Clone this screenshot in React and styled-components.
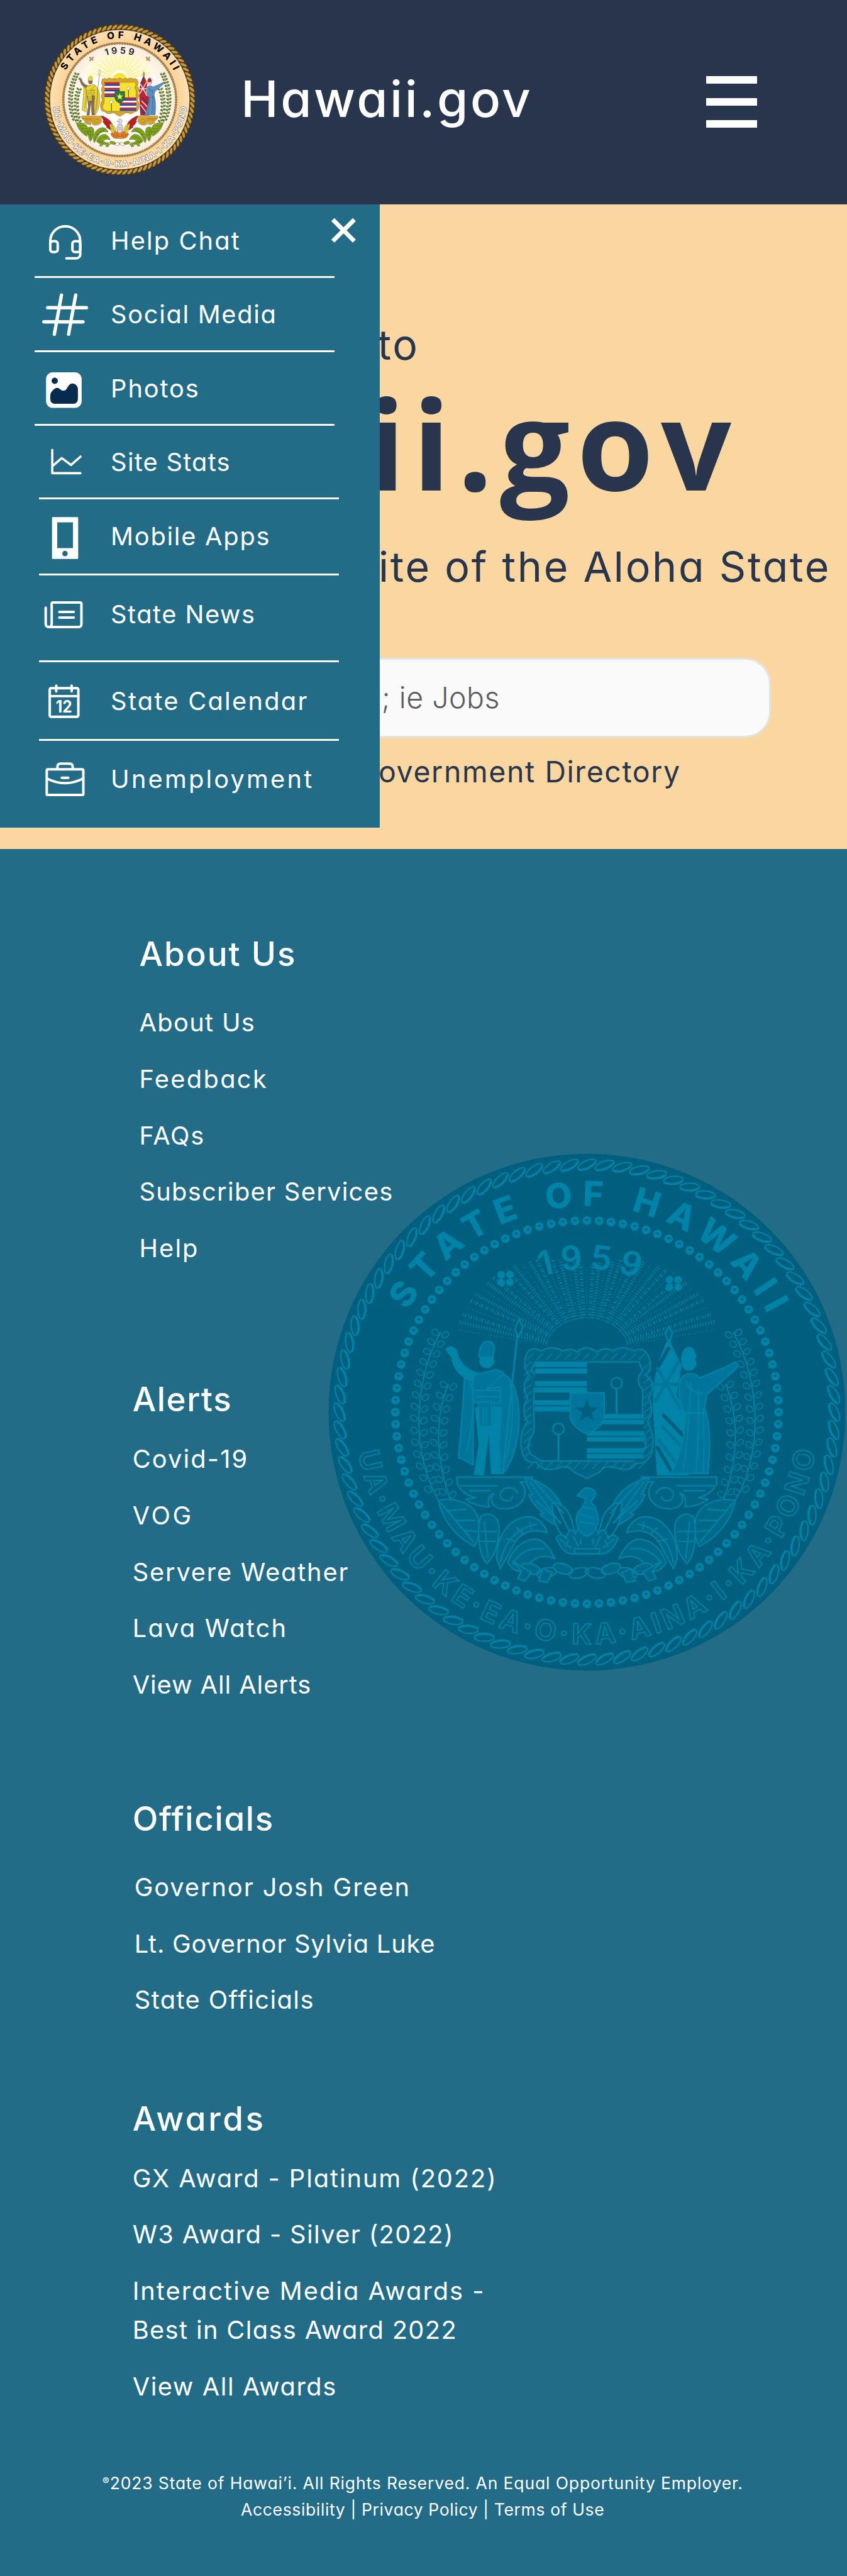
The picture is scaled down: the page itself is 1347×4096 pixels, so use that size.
import React from 'react';
import styled, { createGlobalStyle } from 'styled-components';

const K = 1347 / 1560;
const u = (n) => `${(n * K).toFixed(2)}px`;

const NAVY = '#29354d';
const TEAL = '#226c87';
const SAND = '#fad7a0';
const SEAL_BG = '#005f7f';
const SEAL_MID = '#00749a';
const SEAL_LINE = '#0083a6';

const GlobalStyle = createGlobalStyle`
  * { box-sizing: border-box; }
  body {
    margin: 0;
    background: ${TEAL};
    font-family: Inter, "Open Sans", sans-serif;
    font-feature-settings: "cv11";
  }
  h1, h2, p, ul { margin: 0; padding: 0; }
  ul { list-style: none; }
`;

const Page = styled.div`
  width: ${u(1560)};
  height: 4096px;
  display: flex;
  flex-direction: column;
  overflow: hidden;
`;

/* ---------- header ---------- */

const Header = styled.header`
  display: flex;
  align-items: flex-start;
  height: ${u(376)};
  flex: none;
  padding: 0 ${u(166)} 0 ${u(80.5)};
  background: ${NAVY};
`;

const HeaderSeal = styled.svg`
  width: ${u(279)};
  height: ${u(279)};
  margin-top: ${u(44.5)};
  flex: none;
`;

const Brand = styled.h1`
  margin: ${u(110.5)} auto 0 ${u(84.5)};
  color: #fff;
  font-size: ${u(92.2)};
  font-weight: 500;
  line-height: ${u(144)};
  letter-spacing: 0.0449em;
  white-space: nowrap;
`;

const Burger = styled.div`
  display: flex;
  flex-direction: column;
  justify-content: space-between;
  width: ${u(94)};
  height: ${u(95)};
  margin-top: ${u(140)};
`;

const BurgerBar = styled.span`
  height: ${u(13.6)};
  background: #fff;
`;

/* ---------- hero ---------- */

const Hero = styled.section`
  position: relative;
  display: flex;
  flex-direction: column;
  align-items: flex-end;
  height: ${u(1188)};
  flex: none;
  padding-top: ${u(200)};
  background: ${SAND};
  color: ${NAVY};
  white-space: nowrap;
`;

const HeroLine = styled.p`
  padding-right: ${(p) => u(p.$right)};
  font-size: ${u(76.8)};
  line-height: ${u(120)};
  letter-spacing: 0.0409em;
`;

const HeroTitle = styled.h2`
  margin-bottom: ${u(48)};
  padding-right: ${u(200)};
  font-family: "Open Sans", sans-serif;
  font-size: ${u(228)};
  font-weight: 700;
  line-height: ${u(240)};
  letter-spacing: 0.058em;
`;

const SearchBox = styled.div`
  display: flex;
  align-items: center;
  justify-content: flex-end;
  width: ${u(1280)};
  height: ${u(147.4)};
  margin: ${u(107.6)} ${u(139.7)} ${u(20)} 0;
  padding: 0 ${u(496)} ${u(2)} 0;
  border: ${u(4)} solid #e3e4e6;
  border-radius: ${u(48)};
  background: #fafafa;
  color: #5c5c5c;
  font-size: ${u(53.8)};
  font-weight: 300;
  letter-spacing: 0.0115em;
`;

const DirectoryLink = styled.p`
  padding-right: ${u(306)};
  font-size: ${u(53.8)};
  line-height: ${u(84)};
  letter-spacing: 0.0345em;
`;

/* ---------- slide-out menu ---------- */

const MenuPanel = styled.nav`
  position: absolute;
  top: 0;
  left: 0;
  width: ${u(700)};
  height: ${u(1148)};
  background: ${TEAL};
  color: #fff;
`;

const CloseButton = styled.svg`
  position: absolute;
  top: ${u(24)};
  left: ${u(608)};
  width: ${u(50)};
  height: ${u(50)};
  stroke: #fff;
  stroke-width: 8;
`;

const MenuItem = styled.li`
  display: flex;
  align-items: flex-start;
  gap: ${u(36)};
  width: ${u(552)};
  height: ${(p) => u(p.$height)};
  margin-left: ${(p) => u(p.$indent)};
  padding-left: ${(p) => u(72 - p.$indent)};
  padding-top: ${(p) => u(p.$top)};
  border-bottom: ${(p) => (p.$last ? '0' : u(4))} solid #fff;
`;

const MenuIcon = styled.svg`
  width: ${u(96)};
  height: ${u(88)};
  flex: none;
  fill: none;
  stroke: #fff;
  stroke-width: 4.6;
  stroke-linecap: round;
  stroke-linejoin: round;
`;

const MenuLabel = styled.span`
  font-size: ${u(46.1)};
  line-height: ${u(88)};
  letter-spacing: ${(p) => p.$track}em;
  white-space: nowrap;
`;

const MENU = [
  {
    label: 'Help Chat', track: 0.0522, indent: 64, height: 136, top: 23.4, y: 399.4,
    icon: (
      <>
        <path d="M92.8 450v-6a27.6 27.6 0 0 1 55.2 0v24.5a7 7 0 0 1-7 7h-18.500" />
        <rect x="92.8" y="444" width="13.700" height="20" rx="4.500" />
        <rect x="133.600" y="444" width="14.400" height="20" rx="4.500" />
      </>
    ),
  },
  {
    label: 'Social Media', track: 0.0416, indent: 64, height: 136, top: 23.4, y: 535.4,
    icon: <path strokeWidth="6.200" d="M88 567h71.500M81 593h72M113.400 543.700L100.300 616M139.600 543.700L126.500 616" />,
  },
  {
    label: 'Photos', track: 0.0474, indent: 64, height: 136, top: 23.4, y: 671.4,
    icon: (
      <>
        <rect x="85" y="685.200" width="65.600" height="65.600" rx="12.500" fill="#fff" stroke="none" />
        <circle cx="101" cy="701" r="5.800" fill="#072b4f" stroke="none" />
        <path
          fill="#072b4f"
          stroke="none"
          d="M92.700 729C93 722 97 719 101 715.500C104 713 108 713.500 111 716.500C115 720 119 720 122.500 716.500C126 711 128.500 706 133.500 706C139 706 143.700 711 143.700 716V734Q143.700 743.200 135 743.200H101.500Q92.700 743.200 92.700 734Z"
        />
      </>
    ),
  },
  {
    label: 'Site Stats', track: 0.031, indent: 72, height: 136, top: 23.4, y: 807.4,
    icon: <path strokeWidth="4.200" d="M96.500 828.500V871.600H148.300M97.500 858L113.900 843.700L130.900 856.400L148.600 841" />,
  },
  {
    label: 'Mobile Apps', track: 0.0436, indent: 72, height: 140, top: 23.5, y: 943.5,
    icon: (
      <>
        <rect x="96" y="952" width="48.200" height="76.800" rx="1" fill="#fff" stroke="none" />
        <rect x="105.600" y="961.500" width="29" height="47.500" fill={TEAL} stroke="none" />
        <circle cx="119.900" cy="1019" r="5" fill={TEAL} stroke="none" />
      </>
    ),
  },
  {
    label: 'State News', track: 0.0368, indent: 72, height: 160, top: 27.4, y: 1087.4,
    icon: (
      <path d="M84.400 1119v30a5.500 5.500 0 0 0 11 0V1112q0-2.700 2.700-2.700h49.500q2.600 0 2.600 2.700v37q0 5.600-5.700 5.600H90M109.500 1126.900H136M109.500 1137.100H136" />
    ),
  },
  {
    label: 'State Calendar', track: 0.0564, indent: 72, height: 144, top: 27.6, y: 1247.6,
    icon: (
      <>
        <rect x="91.800" y="1267.600" width="52.700" height="52.800" rx="2.500" />
        <path d="M92 1282.200h52.500M103.800 1263v10.500M132.200 1263v10.500" />
        <text
          x="118" y="1312.600" textAnchor="middle" textLength="30" lengthAdjust="spacingAndGlyphs"
          fontSize="31" fontWeight="700" fill="#fff" stroke="none"
        >
          12
        </text>
      </>
    ),
  },
  {
    label: 'Unemployment', track: 0.0795, indent: 72, height: 150, top: 27.1, y: 1391.1, last: true,
    icon: (
      <path d="M88.500 1417h63q2.200 0 2.200 2.200v42.800q0 2.200-2.200 2.200h-63q-2.200 0-2.200-2.200v-42.800q0-2.200 2.200-2.200ZM106 1416v-4q0-5.500 5.500-5.500h17q5.500 0 5.500 5.500v4M87 1434q33 17 66 0M114 1432.500h12" />
    ),
  },
];

/* ---------- footer ---------- */

const Footer = styled.footer`
  position: relative;
  flex: 1;
  padding-top: ${u(145.2)};
  background: ${TEAL};
  color: #fff;
`;

const Watermark = styled.svg`
  position: absolute;
  top: ${u(560)};
  left: ${u(604)};
  width: ${u(953)};
  height: ${u(953)};
`;

const LinkSection = styled.section`
  position: relative;
  margin-left: ${(p) => u(p.$left)};
  margin-bottom: ${(p) => u(p.$after)};
`;

const SectionTitle = styled.h2`
  margin-bottom: ${(p) => u(p.$gap)};
  font-size: ${u(61.4)};
  font-weight: 520;
  line-height: ${u(96)};
  letter-spacing: ${(p) => p.$track}em;
  font-variant-ligatures: none;
`;

const LinkList = styled.ul`
  display: flex;
  flex-direction: column;
  gap: ${u(32)};
  padding-left: ${(p) => u(p.$indent || 0)};
`;

const LinkItem = styled.li`
  display: flex;
  flex-direction: column;
`;

const LinkText = styled.span`
  font-size: ${u(46.1)};
  line-height: ${u(72)};
  letter-spacing: ${(p) => p.$track}em;
  white-space: nowrap;
`;

const Legal = styled.div`
  position: relative;
  display: flex;
  flex-direction: column;
  align-items: center;
  padding-right: ${u(3)};
`;

const LegalLine = styled.p`
  font-size: ${u(30.7)};
  line-height: ${u(48)};
  letter-spacing: ${(p) => p.$track}em;
  white-space: nowrap;
`;

const RaisedMark = styled.span`
  font-size: 0.62em;
  line-height: 0;
  vertical-align: 0.42em;
`;

const SECTIONS = [
  {
    title: 'About Us', track: 0.037, left: 256.5, gap: 42, after: 194.1,
    links: [
      [['About Us', 0.0334]],
      [['Feedback', 0.0584]],
      [['FAQs', 0.0447]],
      [['Subscriber Services', 0.0324]],
      [['Help', 0.0521]],
    ],
  },
  {
    title: 'Alerts', track: 0.0279, left: 244, gap: 25.7, after: 162.5,
    links: [
      [['Covid-19', 0.0532]],
      [['VOG', 0.0911]],
      [['Servere Weather', 0.0455]],
      [['Lava Watch', 0.0557]],
      [['View All Alerts', 0.0231]],
    ],
  },
  {
    title: 'Officials', track: 0.03, left: 244, gap: 42, after: 134.4, indent: 3.5,
    links: [
      [['Governor Josh Green', 0.0481]],
      [['Lt. Governor Sylvia Luke', 0.0197]],
      [['State Officials', 0.0355]],
    ],
  },
  {
    title: 'Awards', track: 0.0671, left: 244, gap: 25.5, after: 118,
    links: [
      [['GX Award - Platinum (2022)', 0.048]],
      [['W3 Award - Silver (2022)', 0.0345]],
      [['Interactive Media Awards -', 0.0502], ['Best in Class Award 2022', 0.034]],
      [['View All Awards', 0.0387]],
    ],
  },
];

/* ---------- state seal ---------- */

const range = (n) => Array.from({ length: n }, (_, i) => i);
const polar = (r, deg) => {
  const a = ((deg - 90) * Math.PI) / 180;
  return [r * Math.cos(a), r * Math.sin(a)];
};
const arc = (r, from, to, sweep) => {
  const [x1, y1] = polar(r, from);
  const [x2, y2] = polar(r, to);
  return `M${x1.toFixed(1)} ${y1.toFixed(1)}A${r} ${r} 0 ${Math.abs(to - from) > 180 ? 1 : 0} ${sweep} ${x2.toFixed(1)} ${y2.toFixed(1)}`;
};
const bez = (p, t) => {
  const s = 1 - t;
  return [0, 1].map((k) => s * s * s * p[0][k] + 3 * s * s * t * p[1][k] + 3 * s * t * t * p[2][k] + t * t * t * p[3][k]);
};

function Branch({ pts, leaf, line, n }) {
  const [a, b, c, d] = pts;
  return (
    <g>
      <path d={`M${a}C${b} ${c} ${d}`} fill="none" stroke={line} strokeWidth="2" />
      {range(n).map((i) => {
        const [x, y] = bez(pts, i / n);
        return (
          <g key={i} fill={leaf} stroke={line} strokeWidth="1.500">
            <ellipse cx={x - 8} cy={y} rx="6" ry="4.500" transform={`rotate(40 ${x - 8} ${y})`} />
            <ellipse cx={x + 8} cy={y + 4} rx="6" ry="4.500" transform={`rotate(-40 ${x + 8} ${y + 4})`} />
          </g>
        );
      })}
    </g>
  );
}

function HalfGarland({ c }) {
  return (
    <g stroke={c.ink} strokeWidth={c.lw}>
      <Branch pts={[[243, 318], [205, 390], [190, 500], [240, 590]]} leaf={c.sprig} line={c.stem} n={15} />
      <Branch pts={[[256, 402], [232, 460], [236, 530], [262, 596]]} leaf={c.sprig} line={c.stem} n={10} />
      <path fill={c.gold} d="M270 552H392V560H372C388 572 380 600 352 603C330 606 318 590 330 578C322 580 318 590 322 600C306 600 292 594 284 588L300 585C284 582 274 572 270 562Z" />
      <path fill="none" d="M368 578c-4-12-26-12-28 2c0 12 16 14 20 4M275 566h60M290 574h34" />
      <path fill={c.leaf} d="M240 590C262 584 296 592 304 618C308 640 304 656 298 664C270 650 246 622 240 590Z" />
      <path fill={c.leaf} d="M308 616C322 606 338 616 338 634C338 660 330 680 318 692C304 676 302 640 308 616Z" />
      <path fill={c.leaf} d="M334 684C334 644 356 616 388 616C402 618 412 628 416 642C392 634 372 642 362 660C354 676 346 690 340 700Z" />
      <path fill={c.leaf} d="M352 690C362 662 384 648 404 654C418 662 424 674 428 684C408 676 394 682 386 694C376 712 360 704 352 690Z" />
      <path fill="none" d="M244 594l52 62M314 624l6 58M340 690q10-52 58-62M360 692q16-28 50-24M256 606l28-2M268 622l30 0M280 638l22 2M308 640h26M308 656h24M350 652l16 4M366 634l10 8M388 624l2 12" />
      <path fill={c.wing} d="M380 553C400 556 428 572 438 596C444 610 446 622 446 636C432 632 414 622 404 612L410 610C396 600 388 588 386 580L392 580C386 572 382 562 380 553Z" />
      <path fill={c.flame2} d="M424 594C438 592 452 606 456 624L462 646L442 648C430 636 424 616 424 594Z" />
      <path fill="none" d="M388 560l48 66M396 560l46 50M398 590l40 36M432 600l20 40" />
      {range(4).map((i) => (
        <ellipse key={i} cx={388 + i * 26} cy={700 + (i % 2) * 7} rx="16" ry="8" fill={i % 2 ? 'none' : c.leaf} transform={`rotate(${i % 2 ? -14 : 16} ${388 + i * 26} ${704})`} />
      ))}
      <path fill={c.leaf} d="M360 688l14 16l-6 12l12 4l10-14ZM408 700l-6 20l14 2l8-16Z" />
    </g>
  );
}

function Stripes({ x, y, w, h, c }) {
  const step = h / 8;
  return (
    <g stroke="none">
      <rect x={x} y={y} width={w} height={h} fill={c.white} />
      {range(8).map((i) => (
        <rect key={i} x={x} y={y + i * step} width={w} height={step * c.stripe} fill={[c.red, c.blue, c.white][i % 3]} />
      ))}
    </g>
  );
}

function Scene({ c, mono }) {
  const rays = range(17).filter((i) => i > 0 && i < 16);
  return (
    <g strokeLinejoin="round" strokeLinecap="round">
      {mono
        ? range(43).map((i) => {
            const a = ((188 + i * 3.9) * Math.PI) / 180;
            const far = 128 + 62 * Math.abs(Math.cos(a));
            return (
              <path
                key={i}
                d={`M${480 + 66 * Math.cos(a)} ${345 + 50 * Math.sin(a)}L${480 + far * 1.12 * Math.cos(a)} ${340 + far * Math.sin(a)}`}
                stroke={c.ink}
                strokeWidth={i % 3 ? 5.5 : 1.4}
                strokeDasharray={i % 2 ? '1.5 3' : '1 4 2 2.5'}
                strokeLinecap="butt"
              />
            );
          })
        : rays.map((i) => {
            const p = (d, k) => {
              const a = (d * Math.PI) / 180;
              const far = k ? 128 + 70 * Math.abs(Math.cos(a)) ** 1.4 : 50;
              return `${480 + far * Math.cos(a)} ${350 + far * Math.sin(a)}`;
            };
            const m = 180 + i * 11.25;
            return <path key={i} d={`M${p(m - 4, 0)}L${p(m - 4.400, 1)}L${p(m + 4.400, 1)}L${p(m + 4, 0)}Z`} fill="url(#rayFade)" />;
          })}
      <circle cx="480" cy="357" r="42" fill={c.sun} />

      <HalfGarland c={c} />
      <g transform="translate(960 0) scale(-1 1)"><HalfGarland c={c} /></g>

      {/* king */}
      <g stroke={c.ink} strokeWidth={c.lw}>
        <path fill={c.cape} d="M282 392C296 384 340 378 352 390C372 410 376 470 362 512C356 530 350 540 344 546H326L330 420L296 430V532L272 520C276 480 280 430 282 392Z" />
        <path fill={c.skin} d="M252 346C258 338 266 342 270 350C272 364 284 380 304 384L302 396C280 398 262 374 262 358Z" />
        <path fill={c.skin} d="M300 440H342L338 500L340 546H326L322 470L312 548H298L306 500Z" />
        <path fill={c.cape} d="M296 388L334 378L346 384L318 410L340 406V432H296Z" />
        <path fill={c.cape} d="M304 430h22v40h-20Z" />
        <circle cx="318" cy="364" r="11" fill={c.skin} />
        <path fill={c.cape} d="M306 358C304 330 328 324 330 344L328 358Z" />
        <path fill="none" stroke={c.spear} strokeWidth="3" d="M368 316L344 546" />
        <path fill={c.white} d="M370 296l6 14l-7 16l-5-14Z" />
        <path fill="none" d="M290 400q14 20-4 110M356 400q10 50-6 120M300 412h38M300 422h38M312 440v26M318 440v26" />
      </g>

      {/* liberty */}
      <g stroke={c.ink} strokeWidth={c.lw}>
        <path fill={c.gold} d="M613 308l5 12l-3 10h-5l-3-10Z" />
        <path fill={c.red} d="M612 330C596 360 586 400 588 440L594 548H642L650 470L624 420L632 372Z" />
        <path fill="none" stroke={c.flagLine} strokeWidth="5" d="M594 376L630 440M628 366L590 430M588 402H632M602 470L640 510M596 492L626 532" />
        <path fill="none" stroke={c.flagBlue} strokeWidth="6" d="M612 344L596 372M604 452L646 496M594 504L616 542" />
        <path fill={c.dress} d="M632 392C640 382 656 382 662 392L700 376L720 366L724 374L704 392L674 418L670 440C682 470 678 520 676 546H616C630 520 640 480 640 450C630 440 626 410 632 392Z" />
        <path fill="none" d="M648 400q-2 70-12 140M660 410q2 80-4 134M668 440q2 60 0 104M640 398q10 20 28 18M640 448h30" />
        <circle cx="645" cy="368" r="11" fill={c.face} />
        <path fill={c.red} d="M633 362C634 340 652 334 656 358L650 366Z" />
      </g>

      {/* shield */}
      <g stroke={c.ink} strokeWidth={c.lw}>
        <path
          fill={c.gold}
          d="M384 350Q394 340 406 348Q424 338 440 348Q454 342 464 350Q480 336 496 350Q508 340 522 348Q538 338 556 348Q570 340 578 354Q588 370 576 388Q594 400 580 424Q590 444 578 462Q590 484 586 506Q582 530 560 530Q548 546 526 536Q508 532 500 544L480 554L460 544Q448 530 432 538Q408 544 398 528Q376 530 374 504Q370 480 384 462Q372 444 384 424Q372 404 386 388Q374 368 384 350Z"
        />
        <path fill={c.field} d="M396 366H564L570 380Q556 396 570 410V480Q580 496 570 514L554 526H406L388 514Q380 500 394 480V410Q406 396 390 380Z" />
        <Stripes x={396} y={366} w={84} h={82} c={c} />
        <Stripes x={480} y={450} w={92} h={74} c={c} />
        {mono && (
          <path
            fill="none"
            strokeWidth="1.500"
            d={range(13).map((i) => `M${384 + i * 15} ${362}l10-10M${384 + i * 15} 538l10-10M${378} ${376 + i * 12}l12-10M572 ${376 + i * 12}l12-10`).join('')}
          />
        )}
        <path fill="none" strokeWidth="3" d="M528 400V448M434 474V524" stroke={c.pole} />
        <circle cx="528" cy="400" r="9" fill={c.white} />
        <circle cx="434" cy="474" r="9" fill={c.white} />
        <path fill={c.green} d="M453 416H508V456Q504 472 480 482Q457 472 453 456Z" />
        <path fill={c.star} strokeWidth="0.500" d="M480 424l5 15h15l-12 9l5 15l-13-9l-13 9l5-15l-12-9h15Z" />
      </g>

      {/* phoenix */}
      <g stroke={c.ink} strokeWidth={c.lw}>
        <path fill={c.fire} d="M430 650Q440 640 446 652Q452 628 462 644Q470 620 480 640Q492 620 498 644Q508 628 514 652Q524 640 530 652Q520 674 506 676H454Q440 674 430 650Z" />
        <path fill={c.bird} d="M464 582L476 570Q492 568 494 580Q490 588 486 592Q500 606 498 626L490 642L480 648L470 642Q458 626 466 608Q476 600 478 586Z" />
        <path fill={c.gold} d="M460 668h40v8h-40Z" />
        <path fill="none" d="M470 612l20 6M468 624l24 4M472 600l18 4M446 664l4-10M514 664l-4-10M470 660v-8M490 660v-8M436 652l18 14M524 652l-18 14M458 648l8 16M502 648l-8 16" />
      </g>
    </g>
  );
}

const FULL = {
  ink: '#3b3320', lw: 1.2, sprig: '#5f8a1d', stem: '#2e4a10', leaf: '#7fa61c', gold: '#d9a52c', wing: '#c41f26',
  flame2: '#e8cf3a', white: '#fff', red: '#c4202c', blue: '#27408f', stripe: 1, cape: '#ecd62c', skin: '#8f6b52',
  spear: '#8d8d86', dress: '#5c93c9', face: '#f0d9c0', flagLine: '#f4f0f0', flagBlue: '#27408f', field: '#f8e22e',
  sun: '#fbe233', pole: '#222', green: '#25793a', star: '#f8e85a', fire: '#ee7a22', bird: '#dcdcdc',
};
const MONO = {
  ink: SEAL_LINE, lw: 2.2, sprig: SEAL_BG, stem: SEAL_LINE, leaf: '#00698a', gold: '#006485', wing: '#006f93',
  flame2: SEAL_BG, white: SEAL_BG, red: SEAL_LINE, blue: SEAL_LINE, stripe: 0.8, cape: SEAL_MID, skin: SEAL_LINE,
  spear: SEAL_LINE, dress: SEAL_MID, face: SEAL_LINE, flagLine: SEAL_MID, flagBlue: SEAL_BG, field: SEAL_BG,
  sun: SEAL_BG, pole: SEAL_LINE, green: SEAL_MID, star: SEAL_BG, fire: '#00698a', bird: SEAL_MID,
};

const MOTTO = 'UA·MAU·KE·EA·O·KA·AINA·I·KA·PONO';

function ColorSeal() {
  return (
    <HeaderSeal viewBox="-418 -418 836 836">
      <defs>
        <radialGradient id="core"><stop offset="0.6" stopColor="#fff" /><stop offset="1" stopColor="#fdebda" /></radialGradient>
        <radialGradient id="band"><stop offset="0.78" stopColor="#fbcf8e" /><stop offset="1" stopColor="#fde0b6" /></radialGradient>
        <radialGradient id="rayFade" gradientUnits="userSpaceOnUse" cx="480" cy="350" r="190">
          <stop offset="0.25" stopColor="#fbf08e" /><stop offset="1" stopColor="#fffbe0" />
        </radialGradient>
        <path id="topArc" d={arc(338, -75, 75, 1)} />
        <path id="yearArc" d={arc(254, -30, 30, 1)} />
        <path id="mottoArc" d={arc(371, 280, 80, 0)} />
      </defs>
      <circle r="417" fill="#4b3819" />
      <circle r="386" fill="url(#band)" stroke="#3b2a12" strokeWidth="2" />
      {range(88).map((i) => (
        <g key={i} transform={`rotate(${i * (360 / 88)}) translate(0 -401)`}>
          <ellipse rx="20" ry="8.500" transform="rotate(-38)" fill="#c3983f" stroke="#3b2a12" strokeWidth="1.800" />
        </g>
      ))}
      <circle r="311" fill="url(#core)" />
      {range(136).map((i) => {
        const [x, y] = polar(311, (i * 360) / 136);
        return <circle key={i} cx={x} cy={y} r="5.800" fill="#bb9142" stroke="#3b2a12" strokeWidth="1.600" />;
      })}
      <text fontSize="53" fontWeight="800" fill="#0b0805" letterSpacing="18" wordSpacing="6" textAnchor="middle">
        <textPath href="#topArc" startOffset="51%">STATE OF HAWAII</textPath>
      </text>
      <text fontSize="50" fontWeight="600" fill="#1b1b1b" letterSpacing="13" textAnchor="middle">
        <textPath href="#yearArc" startOffset="52%">1959</textPath>
      </text>
      <text fontSize="46" fontWeight="700" fill="#fff" stroke="#4a4037" strokeWidth="3.500" paintOrder="stroke" letterSpacing="7" textAnchor="middle">
        <textPath href="#mottoArc" startOffset="50.3%">{MOTTO}</textPath>
      </text>
      {[-156, 156].map((x) => (
        <path key={x} transform={`translate(${x} -225)`} d="M-11-11L11 11M11-11L-11 11" stroke="#b8904a" strokeWidth="8" />
      ))}
      <g transform="translate(-480 -462)"><Scene c={FULL} /></g>
    </HeaderSeal>
  );
}

function WatermarkSeal() {
  return (
    <Watermark viewBox="-476.500 -476.500 953 953">
      <defs>
        <path id="wmTop" d={arc(379, -75, 75, 1)} />
        <path id="wmYear" d={arc(263, -30, 30, 1)} />
        <path id="wmMotto" d={arc(427, 280, 80, 0)} />
      </defs>
      <circle r="476" fill={SEAL_BG} />
      <g fill={SEAL_BG} stroke={SEAL_LINE} strokeWidth="2.500">
        {range(88).map((i) => (
          <g key={i} transform={`rotate(${i * (360 / 88)}) translate(0 -456)`}>
            <ellipse rx="18" ry="7" transform="rotate(-24)" />
            <path d="M-15 10Q4 10 16-4" fill="none" strokeWidth="4" />
          </g>
        ))}
      </g>
      {range(100).map((i) => {
        const [x, y] = polar(353, i * 3.6);
        return (
          <g key={i}>
            <circle cx={x} cy={y} r="8" fill={SEAL_LINE} />
            <ellipse cx={x} cy={y - 1} rx="3.200" ry="2" fill={SEAL_BG} />
          </g>
        );
      })}
      <text fontSize="64" fontWeight="800" fill={SEAL_LINE} letterSpacing="17" wordSpacing="4" textAnchor="middle">
        <textPath href="#wmTop" startOffset="51.2%">STATE OF HAWAII</textPath>
      </text>
      <text fontSize="62" fontWeight="600" fill={SEAL_LINE} letterSpacing="12" textAnchor="middle">
        <textPath href="#wmYear" startOffset="54%">1959</textPath>
      </text>
      <text fontSize="52" fontWeight="700" fill={SEAL_BG} stroke={SEAL_LINE} strokeWidth="2" letterSpacing="7" textAnchor="middle">
        <textPath href="#wmMotto" startOffset="50.3%">{MOTTO}</textPath>
      </text>
      {[[-150, -246], [160, -237]].map(([x, y]) => (
        <g key={x} transform={`translate(${x} ${y})`} fill={SEAL_LINE}>
          {[[-8, -7], [8, -7], [-8, 7], [8, 7]].map(([dx, dy]) => <circle key={`${dx}${dy}`} cx={dx} cy={dy} r="7" />)}
          <circle r="4" fill={SEAL_BG} />
        </g>
      ))}
      <g transform="scale(1.139) translate(-480 -447)"><Scene c={MONO} mono /></g>
    </Watermark>
  );
}

export default function App() {
  return (
    <Page>
      <GlobalStyle />
      <Header>
        <ColorSeal />
        <Brand>Hawaii.gov</Brand>
        <Burger><BurgerBar /><BurgerBar /><BurgerBar /></Burger>
      </Header>

      <Hero>
        <HeroLine $right={788}>to</HeroLine>
        <HeroTitle>ii.gov</HeroTitle>
        <HeroLine $right={30}>ite of the Aloha State</HeroLine>
        <SearchBox>; ie Jobs</SearchBox>
        <DirectoryLink>overnment Directory</DirectoryLink>

        <MenuPanel>
          <CloseButton viewBox="0 0 50 50"><path d="M5 5L44.500 44.500M44.500 5L5 44.500" /></CloseButton>
          <ul>
            {MENU.map((m) => (
              <MenuItem key={m.label} $indent={m.indent} $height={m.height} $top={m.top} $last={m.last}>
                <MenuIcon viewBox={`72 ${m.y} 96 88`}>{m.icon}</MenuIcon>
                <MenuLabel $track={m.track}>{m.label}</MenuLabel>
              </MenuItem>
            ))}
          </ul>
        </MenuPanel>
      </Hero>

      <Footer>
        <WatermarkSeal />
        {SECTIONS.map((s) => (
          <LinkSection key={s.title} $left={s.left} $after={s.after}>
            <SectionTitle $track={s.track} $gap={s.gap}>{s.title}</SectionTitle>
            <LinkList $indent={s.indent}>
              {s.links.map((lines) => (
                <LinkItem key={lines[0][0]}>
                  {lines.map(([text, track]) => <LinkText key={text} $track={track}>{text}</LinkText>)}
                </LinkItem>
              ))}
            </LinkList>
          </LinkSection>
        ))}
        <Legal>
          <LegalLine $track={0.0325}>
            <RaisedMark>®</RaisedMark>2023 State of Hawai’i. All Rights Reserved. An Equal Opportunity Employer.
          </LegalLine>
          <LegalLine $track={0.024}>Accessibility | Privacy Policy | Terms of Use</LegalLine>
        </Legal>
      </Footer>
    </Page>
  );
}
